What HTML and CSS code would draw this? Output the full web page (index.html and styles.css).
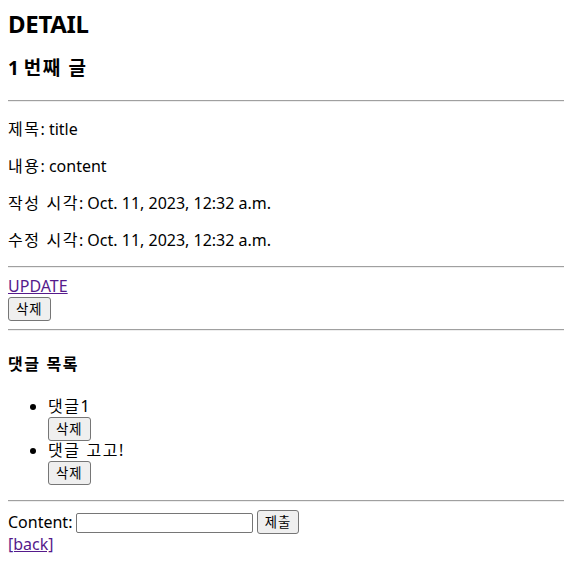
FILE: index.html
```html
<!DOCTYPE html>
<html lang="ko">
<head>
<meta charset="utf-8">
<title>DETAIL</title>
<link rel="stylesheet" href="styles.css">
</head>
<body>
<h1 class="page-title">DETAIL</h1>
<h3 class="post-title">1 <span class="ko">번째 글</span></h3>
<hr class="rule">
<p class="field"><span class="ko">제목</span>: title</p>
<p class="field"><span class="ko">내용</span>: content</p>
<p class="field"><span class="ko">작성 시각</span>: Oct. 11, 2023, 12:32 a.m.</p>
<p class="field"><span class="ko">수정 시각</span>: Oct. 11, 2023, 12:32 a.m.</p>
<hr class="rule">
<a class="link" href="#update">UPDATE</a>
<form class="inline-form"><button class="btn" type="button">삭제</button></form>
<hr class="rule">
<h4 class="section-title"><span class="ko">댓글 목록</span></h4>
<ul class="comments">
  <li class="comment"><span class="ko">댓글</span>1
    <form class="inline-form"><button class="btn" type="button">삭제</button></form>
  </li>
  <li class="comment"><span class="ko">댓글 고고</span>!
    <form class="inline-form"><button class="btn" type="button">삭제</button></form>
  </li>
</ul>
<hr class="rule">
<form class="comment-form">
  <label class="label">Content: <input class="text-input" type="text"></label>
  <button class="btn" type="button">제출</button>
</form>
<a class="link" href="#back">[back]</a>
</body>
</html>
```
FILE: styles.css
```css
body {
  margin: 8px 0 8px 8px;
  font-family: "Noto Sans", "Noto Sans CJK KR", sans-serif;
  font-size: 16px;
  line-height: 21px;
  color: #000;
  background: #fff;
}
.ko {
  font-family: "Noto Sans CJK KR", sans-serif;
  letter-spacing: 1.5px;
  font-weight: 400;
  line-height: 1;
}
.page-title {
  font-size: 24px;
  line-height: 32px;
  margin: 0 0 16px;
  font-weight: bold;
  letter-spacing: -0.3px;
}
.post-title {
  font-size: 19px;
  line-height: 24px;
  margin: 0 0 20px;
  font-weight: bold;
}
.post-title .ko,
.section-title .ko {
  font-weight: bold;
}
.rule {
  margin: 8px 0;
  border: 0;
  border-top: 1px solid #a0a0a0;
  border-bottom: 1px solid #eeeeee;
  height: 0;
}
.field {
  margin: 16px 0;
}
.field:first-of-type {
  margin-top: 17px;
}
.field:last-of-type {
  margin-bottom: 15px;
}
.link {
  color: #551a8b;
  text-decoration: underline;
}
.inline-form {
  margin: 0;
  line-height: 24px;
  height: 24px;
}
.btn {
  font-family: "Noto Sans CJK KR", "Noto Sans", sans-serif;
  font-size: 13.33px;
  line-height: 18px;
  height: 24px;
  padding: 2px 7px;
  border: 1px solid #767676;
  border-radius: 3px;
  background: #efefef;
  color: #000;
  margin: 0;
  vertical-align: top;
  letter-spacing: 1px;
}
.section-title {
  font-size: 16px;
  margin: 23px 0 21px;
  font-weight: bold;
}
.comments {
  margin: 16px 0 15px;
  padding-left: 40px;
}
.comment {
  line-height: 21px;
}
.comment + .comment {
  margin-top: -1px;
}
.comment-form {
  margin: 0;
  line-height: 24px;
  height: 24px;
}
.text-input {
  width: 177px;
  height: 20px;
  box-sizing: border-box;
  border: 1px solid #767676;
  border-radius: 2px;
  padding: 1px 2px;
  margin: 3px 0 0 -1px;
  vertical-align: top;
  font-size: 13.33px;
}
```
